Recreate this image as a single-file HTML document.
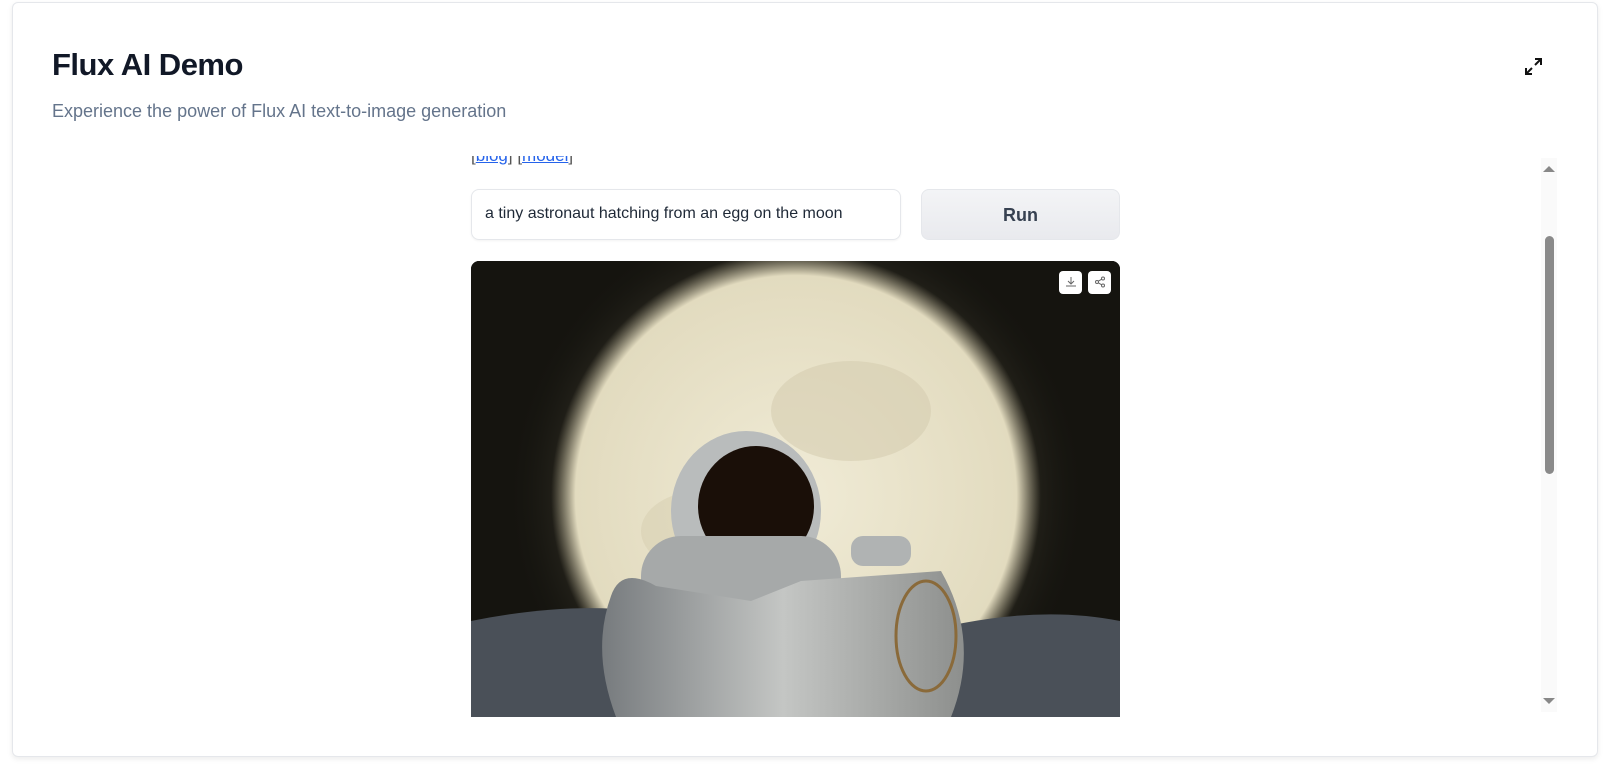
<!DOCTYPE html>
<html><head><style>
*{box-sizing:border-box;margin:0;padding:0}
body{width:1614px;height:767px;background:#fff;font-family:"Liberation Sans",sans-serif;position:relative;overflow:hidden}
.card{position:absolute;left:12px;top:2px;width:1586px;height:755px;border:1px solid #e5e7eb;border-radius:6px;box-shadow:0 2px 6px rgba(0,0,0,.08);background:#fff}
.t{position:absolute;left:52px;top:47px;font-size:31px;font-weight:bold;color:#111827;letter-spacing:-0.5px}
.s{position:absolute;left:52px;top:101px;font-size:18px;color:#64748b}
.inp{position:absolute;left:471px;top:189px;width:430px;height:51px;border:1px solid #e5e7eb;border-radius:8px;font-size:16px;color:#1f2937;padding:15px 13px;box-shadow:0 1px 2px rgba(0,0,0,.05)}
.run{position:absolute;left:921px;top:189px;width:199px;height:51px;border:1px solid #e5e7eb;border-radius:8px;background:linear-gradient(#f3f4f6,#e9eaee);font-size:18px;font-weight:bold;color:#374151;text-align:center;line-height:51px}
.img{position:absolute;left:471px;top:261px;width:649px;height:456px;border-radius:8px 8px 0 0;overflow:hidden;background:#15140f}
.sb{position:absolute;left:1541px;top:158px;width:16px;height:554px;background:#fafafa}
.th{position:absolute;left:1545px;top:236px;width:9px;height:238px;background:#8a8a8a;border-radius:5px}
.btn{position:absolute;top:10px;width:23px;height:23px;background:#fff;border-radius:4px}
</style></head><body>
<div class="card"></div>
<div class="t">Flux AI Demo</div>
<div class="s">Experience the power of Flux AI text-to-image generation</div>
<svg style="position:absolute;left:1524px;top:57px" width="19" height="19" viewBox="0 0 19 19" fill="none" stroke="#111" stroke-width="2"><path d="M11 2h6v6M17 2l-6 6M8 17H2v-6M2 17l6-6"/></svg>
<div style="position:absolute;left:460px;top:156px;width:680px;height:20px;overflow:hidden"><div style="position:absolute;left:11px;top:-10px;font-size:17px;color:#555">[<span style="color:#2563eb;text-decoration:underline">blog</span>] [<span style="color:#2563eb;text-decoration:underline">model</span>]</div></div>
<div class="inp">a tiny astronaut hatching from an egg on the moon</div>
<div class="run">Run</div>
<div class="img">
<svg width="649" height="456" viewBox="0 0 649 456">
<defs>
<radialGradient id="m" cx="50%" cy="50%" r="50%"><stop offset="0" stop-color="#f0ebd6"/><stop offset=".9" stop-color="#e2dbbf"/><stop offset="1" stop-color="#b5ad90" stop-opacity="0"/></radialGradient>
<radialGradient id="g" cx="50%" cy="50%" r="50%"><stop offset=".6" stop-color="#5a5545"/><stop offset="1" stop-color="#15140f" stop-opacity="0"/></radialGradient>
<linearGradient id="e" x1="0" x2="1"><stop offset="0" stop-color="#777b7e"/><stop offset=".5" stop-color="#c4c6c4"/><stop offset="1" stop-color="#8d8f8d"/></linearGradient>
</defs>
<rect width="649" height="456" fill="#15140f"/>
<circle cx="325" cy="235" r="290" fill="url(#g)"/>
<circle cx="325" cy="235" r="245" fill="url(#m)"/>
<ellipse cx="380" cy="150" rx="80" ry="50" fill="#d5cdb0" opacity=".6"/>
<ellipse cx="230" cy="270" rx="60" ry="40" fill="#d5cdb0" opacity=".5"/>
<path d="M0 360 Q150 330 250 370 L250 456 L0 456Z" fill="#4a5058"/>
<path d="M420 380 Q550 340 649 360 L649 456 L420 456Z" fill="#4a5058"/>
<ellipse cx="275" cy="250" rx="75" ry="80" fill="#b9bcbc"/>
<ellipse cx="285" cy="245" rx="58" ry="60" fill="#1a0f08"/>
<rect x="170" y="275" width="200" height="110" rx="40" fill="#a6a9a9"/>
<rect x="380" y="275" width="60" height="30" rx="12" fill="#b0b3b3"/>
<path d="M140 335 Q150 305 185 325 L280 340 L330 320 L470 310 Q510 380 480 456 L145 456 Q120 390 140 335Z" fill="url(#e)"/>
<ellipse cx="455" cy="375" rx="30" ry="55" fill="none" stroke="#8a6a3a" stroke-width="3"/>
</svg>
<div class="btn" style="left:588px"></div>
<div class="btn" style="left:617px"></div>
<svg style="position:absolute;left:594px;top:15px" width="12" height="12" viewBox="0 0 12 12" fill="none" stroke="#666" stroke-width="1"><path d="M6 1v7M3 5l3 3 3-3M1 10h10"/></svg>
<svg style="position:absolute;left:623px;top:15px" width="12" height="12" viewBox="0 0 12 12" fill="none" stroke="#666" stroke-width="1"><circle cx="9" cy="2.5" r="1.5"/><circle cx="3" cy="6" r="1.5"/><circle cx="9" cy="9.5" r="1.5"/><path d="M4.3 5.2l3.4-2M4.3 6.8l3.4 2"/></svg>
</div>
<div class="sb"></div>
<div class="th"></div>
<svg style="position:absolute;left:1542px;top:165px" width="14" height="8"><path d="M1 7L7 1L13 7Z" fill="#888"/></svg>
<svg style="position:absolute;left:1542px;top:697px" width="14" height="8"><path d="M1 1L7 7L13 1Z" fill="#888"/></svg>
</body></html>
